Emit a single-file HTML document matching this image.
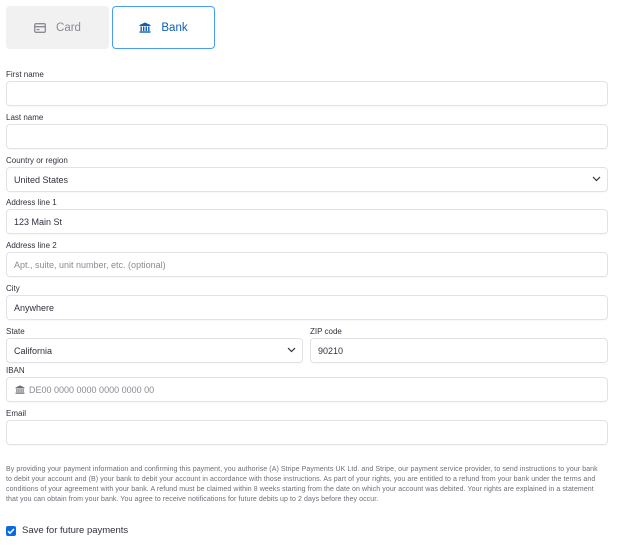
<!DOCTYPE html>
<html><head><meta charset="utf-8"><style>
*{box-sizing:border-box;margin:0;padding:0}
body{width:624px;height:546px;background:#fff;font-family:"Liberation Sans",sans-serif;position:relative;overflow:hidden;color:#30313d}
.a{position:absolute}
.tab{position:absolute;top:6px;height:43px;border-radius:4px;display:flex;align-items:center;justify-content:center;font-size:11.5px}
.lbl{position:absolute;left:6px;font-size:8px;color:#30313d}
.in{position:absolute;height:25px;border:1px solid #e2e2e6;border-radius:4px;box-shadow:0 1px 1px rgba(0,0,0,.03);font-size:9px;display:flex;align-items:center;padding-left:7px;color:#30313d}
.ph{color:#8a8b93}
.chev{position:absolute;right:6px;top:8px}
.d{white-space:nowrap;font-size:7px;color:#6d6e78;position:absolute;left:6px;letter-spacing:0.08px}
</style></head><body>
<div class="tab" style="left:6px;width:103px;background:#f1f1f2;color:#8a8b93">
<svg width="12" height="10" viewBox="0 0 12 10" style="margin-right:10px"><rect x="0.7" y="0.7" width="10.6" height="8.6" rx="1.2" fill="none" stroke="#8a8b93" stroke-width="1.3"/><rect x="1" y="3" width="10" height="1.4" fill="#8a8b93"/><rect x="2.5" y="6" width="3" height="1.2" fill="#8a8b93"/></svg>Card</div>
<div class="tab" style="left:112px;width:103px;border:1.5px solid #4a9cf5;color:#0e5eb5;background:#fff">
<svg width="12" height="11" viewBox="0 0 12 11" style="margin-right:10px"><path d="M6 0.5L11.5 3V4H0.5V3Z" fill="#0e5eb5"/><rect x="1.5" y="4.5" width="1.4" height="4.5" fill="#0e5eb5"/><rect x="4" y="4.5" width="1.4" height="4.5" fill="#0e5eb5"/><rect x="6.6" y="4.5" width="1.4" height="4.5" fill="#0e5eb5"/><rect x="9.1" y="4.5" width="1.4" height="4.5" fill="#0e5eb5"/><rect x="0.5" y="9.3" width="11" height="1.4" fill="#0e5eb5"/></svg>Bank</div>

<div class="lbl" style="top:70px">First name</div>
<div class="in" style="left:6px;width:602px;top:81px"></div>
<div class="lbl" style="top:113px">Last name</div>
<div class="in" style="left:6px;width:602px;top:124px"></div>
<div class="lbl" style="top:156px">Country or region</div>
<div class="in" style="left:6px;width:602px;top:167px">United States<svg class="chev" width="9" height="6" viewBox="0 0 9 6"><path d="M1 1l3.5 3.5L8 1" fill="none" stroke="#30313d" stroke-width="1.2"/></svg></div>
<div class="lbl" style="top:198px">Address line 1</div>
<div class="in" style="left:6px;width:602px;top:209px">123 Main St</div>
<div class="lbl" style="top:241px">Address line 2</div>
<div class="in" style="left:6px;width:602px;top:252px"><span class="ph">Apt., suite, unit number, etc. (optional)</span></div>
<div class="lbl" style="top:284px">City</div>
<div class="in" style="left:6px;width:602px;top:295px">Anywhere</div>
<div class="lbl" style="top:327px">State</div>
<div class="lbl" style="top:327px;left:310px">ZIP code</div>
<div class="in" style="left:6px;width:297px;top:338px">California<svg class="chev" width="9" height="6" viewBox="0 0 9 6"><path d="M1 1l3.5 3.5L8 1" fill="none" stroke="#30313d" stroke-width="1.2"/></svg></div>
<div class="in" style="left:310px;width:298px;top:338px">90210</div>
<div class="lbl" style="top:366px">IBAN</div>
<div class="in" style="left:6px;width:602px;top:377px"><svg width="10" height="9" viewBox="0 0 12 11" style="margin-right:4px;margin-left:1px"><path d="M6 0.5L11.5 3V4H0.5V3Z" fill="#6d6e78"/><rect x="1.5" y="4.5" width="1.4" height="4.5" fill="#6d6e78"/><rect x="4" y="4.5" width="1.4" height="4.5" fill="#6d6e78"/><rect x="6.6" y="4.5" width="1.4" height="4.5" fill="#6d6e78"/><rect x="9.1" y="4.5" width="1.4" height="4.5" fill="#6d6e78"/><rect x="0.5" y="9.3" width="11" height="1.4" fill="#6d6e78"/></svg><span class="ph">DE00 0000 0000 0000 0000 00</span></div>
<div class="lbl" style="top:409px">Email</div>
<div class="in" style="left:6px;width:602px;top:420px"></div>

<div class="d" style="top:466px">By providing your payment information and confirming this payment, you authorise (A) Stripe Payments UK Ltd. and Stripe, our payment service provider, to send instructions to your bank</div>
<div class="d" style="top:476px">to debit your account and (B) your bank to debit your account in accordance with those instructions. As part of your rights, you are entitled to a refund from your bank under the terms and</div>
<div class="d" style="top:486px">conditions of your agreement with your bank. A refund must be claimed within 8 weeks starting from the date on which your account was debited. Your rights are explained in a statement</div>
<div class="d" style="top:496px">that you can obtain from your bank. You agree to receive notifications for future debits up to 2 days before they occur.</div>

<div class="a" style="left:6px;top:526px;width:10px;height:10px;background:#0a6be0;border-radius:2px"><svg width="10" height="10" viewBox="0 0 10 10" style="display:block"><path d="M2 5.2l2 2L8 3" fill="none" stroke="#fff" stroke-width="1.5"/></svg></div>
<div class="a" style="left:22px;top:525px;font-size:9.5px;color:#30313d">Save for future payments</div>
</body></html>
